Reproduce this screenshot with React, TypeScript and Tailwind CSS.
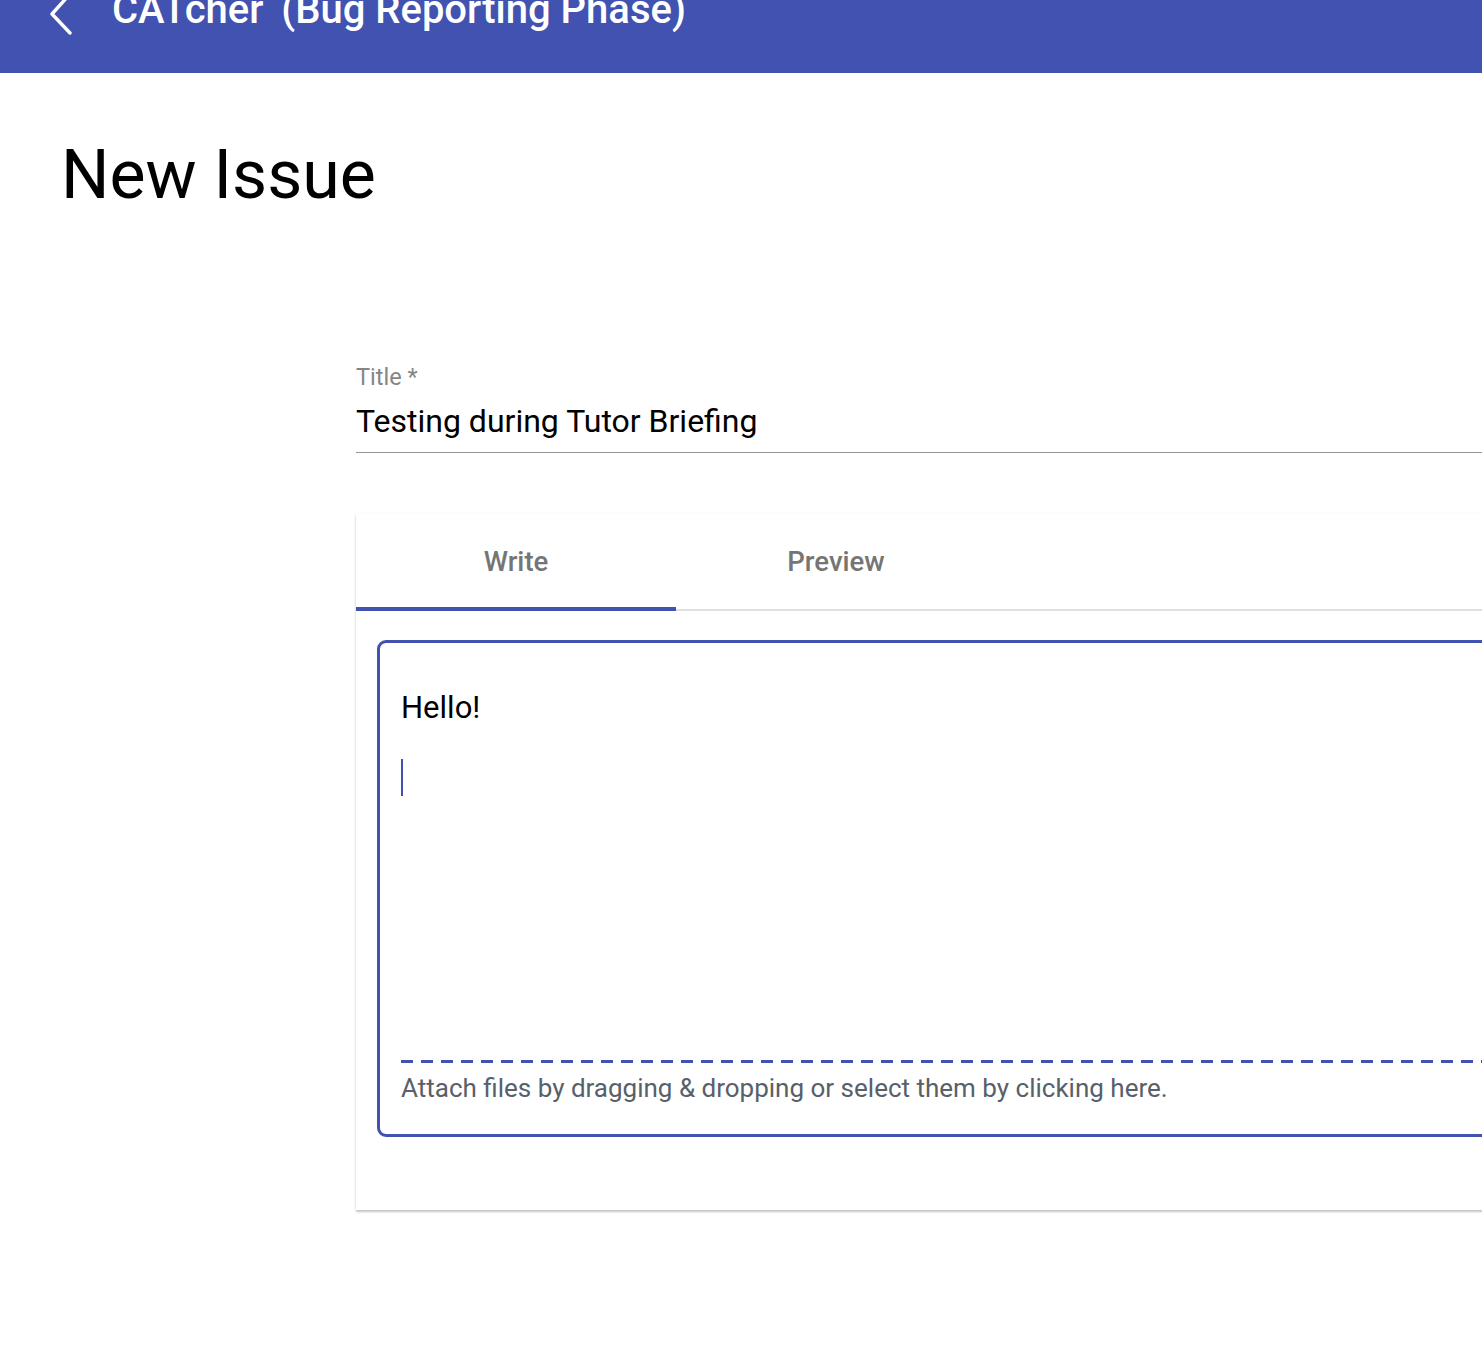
import React from 'react';

export default function App() {
  return (
    <div className="w-[1482px] h-[1352px] overflow-hidden bg-white font-['Roboto',sans-serif]">
      {/* Toolbar (scrolled so the top is cut off) */}
      <div className="h-[73px] bg-[#4152b0] overflow-hidden">
        <div className="flex items-start -mt-[10px] text-white">
          <svg width="30" height="44" viewBox="0 0 30 44" className="ml-[46px] mt-[6px]" fill="none">
            <path d="M24 -2 L6 18 L24 37" stroke="white" strokeWidth="3.4" strokeLinecap="round" strokeLinejoin="round" />
          </svg>
          <div className="ml-[36px] text-[40px] leading-[40px] font-medium whitespace-nowrap">
            CATcher <span className="ml-[8px]">(Bug Reporting Phase)</span>
          </div>
        </div>
      </div>

      <div className="pl-[61px] pt-[62px]">
        <h1 className="text-[68px] leading-[80px] font-normal text-black">New Issue</h1>
      </div>

      <div className="pl-[356px] pt-[148px]">
        <div className="w-[1300px]">
          {/* Title field */}
          <div className="border-b-[1.5px] border-[#949494] pb-[9px]">
            <div className="text-[23.5px] leading-[28px] text-[#858585]">Title *</div>
            <div className="text-[32px] leading-[44px] text-black mt-[8px]">Testing during Tutor Briefing</div>
          </div>

          {/* Editor card */}
          <div className="mt-[61px] bg-white shadow-[0_2px_2px_rgba(0,0,0,0.22),0_0_3px_rgba(0,0,0,0.06)] h-[696px]">
            <div className="flex border-b-2 border-[#e0e0e0] h-[97px]">
              <div className="relative w-[320px] flex items-center justify-center text-[27.5px] font-medium text-[#757575]">
                Write
                <div className="absolute left-0 right-0 -bottom-[2px] h-[4px] bg-[#4152b0]" />
              </div>
              <div className="w-[320px] flex items-center justify-center text-[27.5px] font-medium text-[#757575]">
                Preview
              </div>
            </div>

            <div className="pl-[21px] pt-[29px]">
              <div className="border-[3px] border-[#4152b0] rounded-[9px] h-[497px] px-[21px] flex flex-col">
                <div className="pt-[46px] text-[31px] leading-[38px] text-black">Hello!</div>
                <div className="mt-[32px] w-[2px] h-[37px] bg-[#4152b0]" />
                <div className="flex-1" />
                <div className="h-[3px] bg-[repeating-linear-gradient(to_right,#4152b0_0_12px,transparent_12px_20px)]" />
                <div className="pt-[9px] pb-[30px] text-[26px] leading-[32px] text-[#586069]">
                  Attach files by dragging &amp; dropping or select them by clicking here.
                </div>
              </div>
            </div>
          </div>
        </div>
      </div>
    </div>
  );
}
